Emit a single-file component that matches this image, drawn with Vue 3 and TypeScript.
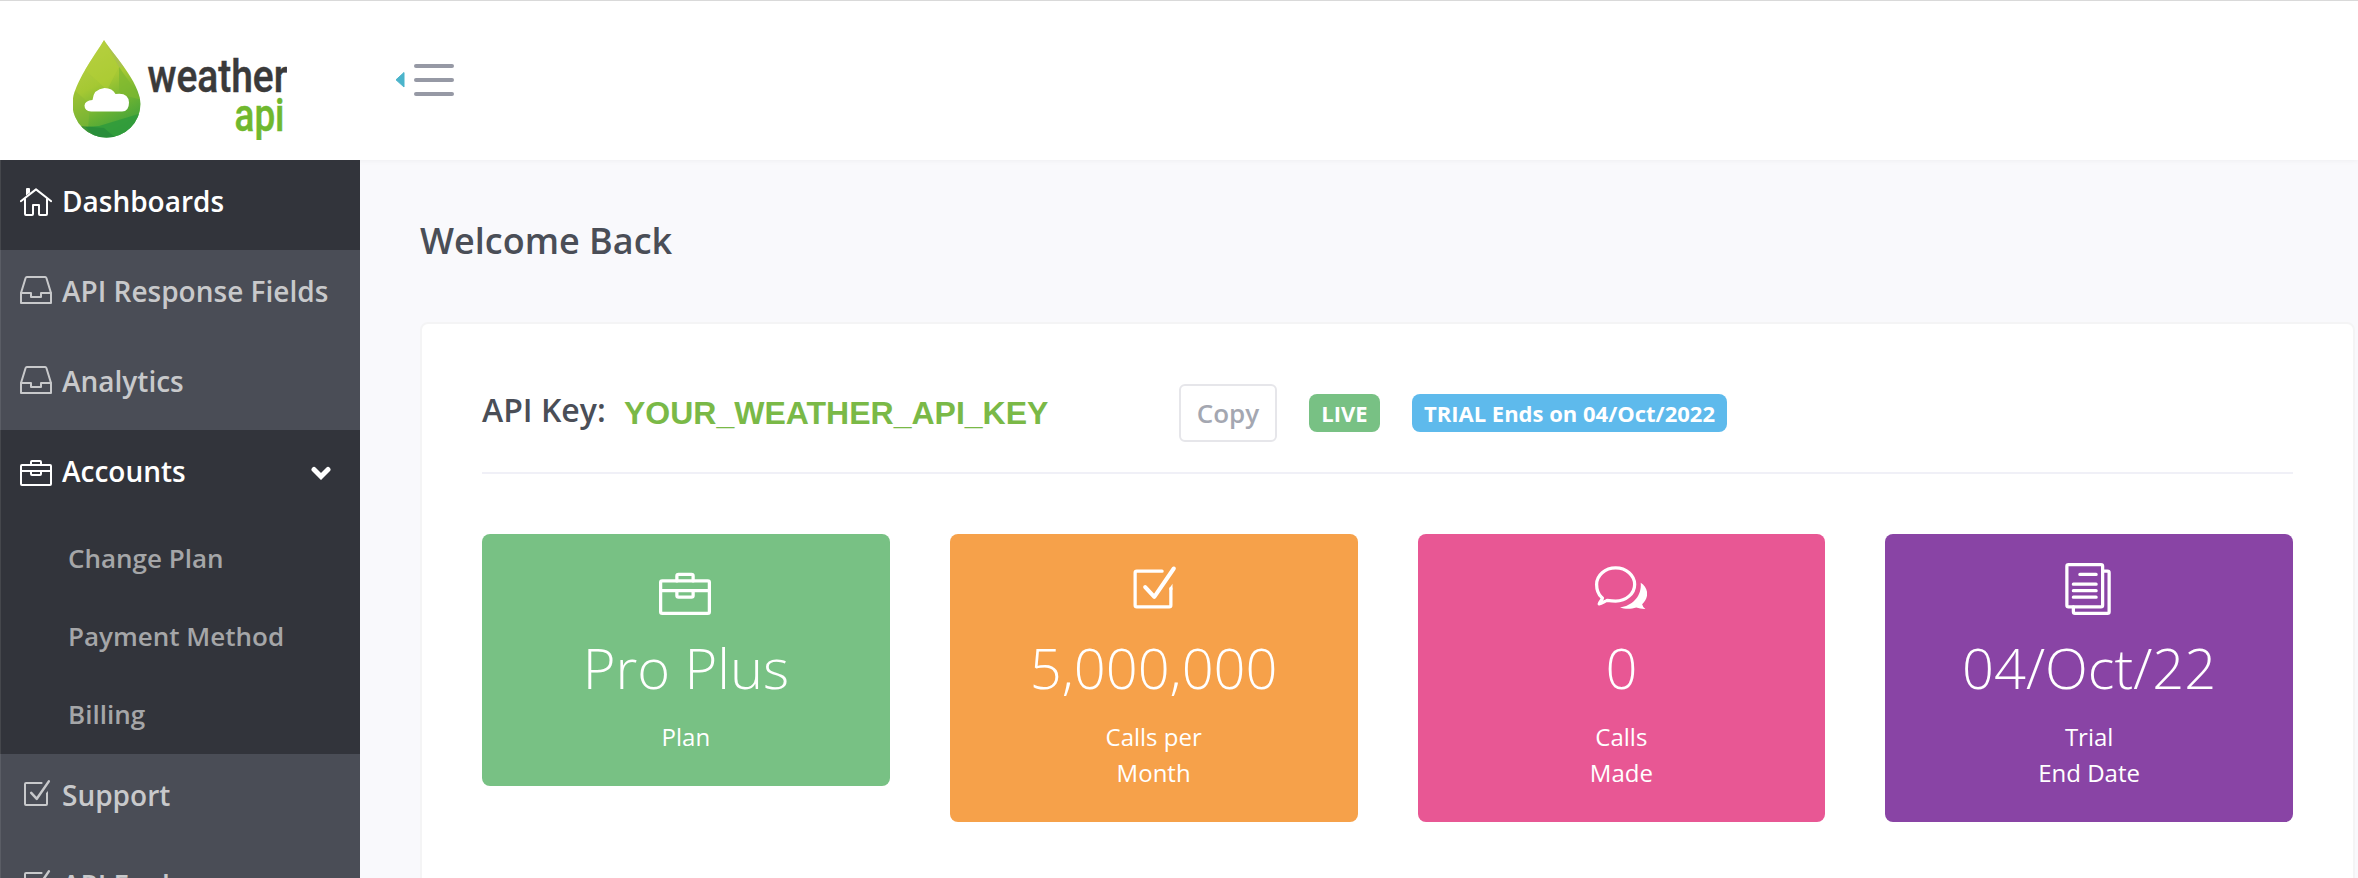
<script setup lang="ts">
interface Shape { d: string; solid?: boolean; width?: number }
type IconName = 'home' | 'inbox' | 'case' | 'check' | 'chat' | 'docs'

const icons: Record<IconName, Shape[]> = {
  home: [
    { d: 'M.4 8.6L8 2.7L15.6 8.6' },
    { d: 'M2.5 7.5V15q0 .5.5.5h3q.5 0 .5-.5v-4.5h3V15q0 .5.5.5h3q.5 0 .5-.5V7.5' },
    { d: 'M3 2.5q0-.5.5-.5h1q.5 0 .5.5v1.7L3 5.8z', solid: true },
  ],
  inbox: [
    { d: 'M.5 9.5L2.8 2q.2-.5.6-.5h9.2q.4 0 .6.5L15.5 9.5V14.5H.5z' },
    { d: 'M.5 9.5h5v2h5v-2h5' },
  ],
  case: [
    { d: 'M1 5.5h14q.5 0 .5.5v9q0 .5-.5.5H1q-.5 0-.5-.5V6q0-.5.5-.5z' },
    { d: 'M5.5 5.5V4q0-.5.5-.5h4q.5 0 .5.5v1.5M.5 8.5h15M5.5 8.5V10q0 .5.5.5h4q.5 0 .5-.5V8.5' },
  ],
  check: [
    { d: 'M10.8 2.5H3q-.5 0-.5.5v10q0 .5.5.5h10q.5 0 .5-.5V7.8' },
    { d: 'M13 7.9l1-1.5v1.8h-1z', solid: true },
    { d: 'M5.6 7.4L8.4 10.4L14.4 1.7', width: 1.25 },
  ],
  chat: [
    { d: 'M2 10.5C.9 9.5.5 8 .5 6.6C.5 3.8 3.1 1.5 6.35 1.5S12.2 3.8 12.2 6.6S9.6 11.7 6.35 11.7C5.3 11.7 4.5 11.6 3.7 11.5C2.8 11.9 2.1 12.5 1.3 12.6C1.4 11.9 2.3 11.2 2.3 10.8z' },
    { d: 'M14.05 6.05C15.4 6.9 16.1 8.2 16.05 9.6C16 10.9 15.3 12 14.5 12.7Q14.7 13.6 15.5 14.15Q14 14.2 12.7 13.7C11 14.3 9 14.2 7.7 13.7C11.5 13.2 14.5 10.2 14.05 6.05z', solid: true },
  ],
  docs: [
    { d: 'M2 .5h10q.5 0 .5.5v12q0 .5-.5.5H2q-.5 0-.5-.5V1q0-.5.5-.5z' },
    { d: 'M5.5 3.5h5M3.5 6.5h7M3.5 8.5h7M3.5 10.5h7' },
    { d: 'M12.5 2.5H14q.5 0 .5.5v12q0 .5-.5.5H4q-.5 0-.5-.5v-1.5' },
  ],
}

interface NavItem { label: string; icon: IconName; active?: boolean; children?: string[] }
const nav: NavItem[] = [
  { label: 'Dashboards', icon: 'home', active: true },
  { label: 'API Response Fields', icon: 'inbox' },
  { label: 'Analytics', icon: 'inbox' },
  { label: 'Accounts', icon: 'case', active: true, children: ['Change Plan', 'Payment Method', 'Billing'] },
  { label: 'Support', icon: 'check' },
  { label: 'API Explorer', icon: 'check' },
]

interface Tile { tone: string; icon: IconName; value: string; lines: string[] }
const tiles: Tile[] = [
  { tone: 'green', icon: 'case', value: 'Pro Plus', lines: ['Plan'] },
  { tone: 'orange', icon: 'check', value: '5,000,000', lines: ['Calls per', 'Month'] },
  { tone: 'pink', icon: 'chat', value: '0', lines: ['Calls', 'Made'] },
  { tone: 'purple', icon: 'docs', value: '04/Oct/22', lines: ['Trial', 'End Date'] },
]
</script>

<template>
  <div class="page">
    <header class="topbar">
      <svg class="logo" viewBox="0 0 214 104" width="214" height="104">
        <defs>
          <linearGradient id="drop" x1=".3" y1="0" x2=".65" y2="1">
            <stop offset="0" stop-color="#b9cf4a" />
            <stop offset=".4" stop-color="#a5c833" />
            <stop offset=".68" stop-color="#68b133" />
            <stop offset="1" stop-color="#2c9a3f" />
          </linearGradient>
          <clipPath id="dropClip"><path d="M31 0C38 12 67.500 42 67.500 64A34 33.500 0 0 1-.5 64C-.5 44 23 14 31 0z" /></clipPath>
        </defs>
        <g clip-path="url(#dropClip)">
          <rect x="-1" width="70" height="104" fill="url(#drop)" />
          <path d="M31 0L46 27L60 26z" fill="#a9bf55" opacity=".7" />
          <path d="M31 0L46 27L34 50L10 28z" fill="#b3cf35" opacity=".5" />
          <path d="M-1 48L17 64L15 90L-1 80z" fill="#8cb836" opacity=".45" />
          <path d="M46 27L69 60L46 54z" fill="#7db82f" opacity=".7" />
          <path d="M69 73L26 86L12 87L30 104H69z" fill="#2f9b3c" opacity=".85" />
          <path d="M8 86L31 88L50 104H20z" fill="#23843a" opacity=".6" />
        </g>
        <path d="M18 71.500q-6.500-.500-6.500-6q.5-5 8-5.500q1-11 12-12q8 0 11 6q13-2 13.500 8.500q0 9-7 9z" fill="#fff" />
        <text x="74.500" y="51.500" class="word dark" textLength="140" lengthAdjust="spacingAndGlyphs">weather</text>
        <text x="161.500" y="91" class="word lime" textLength="50" lengthAdjust="spacingAndGlyphs">api</text>
      </svg>
      <button class="toggle" type="button" aria-label="Toggle menu">
        <svg width="10" height="18" viewBox="0 0 10 18"><path d="M9 1.500L1 8.800L9 16z" fill="#4bb4cb" stroke="#4bb4cb" stroke-linejoin="round" /></svg>
        <span class="bars"><i /><i /><i /></span>
      </button>
    </header>

    <div class="body">
      <nav class="sidebar">
        <div v-for="item in nav" :key="item.label" class="group" :class="{ active: item.active }">
          <a class="link">
            <svg class="glyph" viewBox="0 0 16 16">
              <path v-for="(s, i) in icons[item.icon]" :key="i" :d="s.d" :class="{ solid: s.solid }" :stroke-width="s.width ?? 1" />
            </svg>
            <span class="label">{{ item.label }}</span>
            <svg v-if="item.children" class="chevron" width="20" height="14" viewBox="0 0 20 14"><path d="M3 3.500L10 10.500L17 3.500" /></svg>
          </a>
          <a v-for="child in item.children" :key="child" class="sub">{{ child }}</a>
        </div>
      </nav>

      <main class="content">
        <h1>Welcome Back</h1>
        <section class="card">
          <div class="keyrow">
            <span class="keylabel">API Key:</span>
            <span class="key">YOUR_WEATHER_API_KEY</span>
            <button class="copy" type="button">Copy</button>
            <span class="badge live">LIVE</span>
            <span class="badge trial">TRIAL Ends on 04/Oct/2022</span>
          </div>
          <div class="tiles">
            <article v-for="t in tiles" :key="t.value" class="tile" :class="t.tone">
              <svg class="glyph" viewBox="0 0 16 16">
                <path v-for="(s, i) in icons[t.icon]" :key="i" :d="s.d" :class="{ solid: s.solid }" :stroke-width="s.width ?? 1" />
              </svg>
              <div class="value">{{ t.value }}</div>
              <div v-for="line in t.lines" :key="line" class="line">{{ line }}</div>
            </article>
          </div>
        </section>
      </main>
    </div>
  </div>
</template>

<style>
html, body { margin: 0; overflow: hidden; }
</style>

<style scoped>
.page { box-sizing: border-box; width: 100vw; height: 878px; overflow: hidden; display: flex; flex-direction: column; background: #f9f9fc; font-family: "Open Sans", "Noto Sans", sans-serif; }
.topbar { box-sizing: border-box; flex: none; height: 160px; display: flex; align-items: flex-start; background: #fff; border-top: 1px solid #d9d9d9; box-shadow: 0 0 6px rgba(0, 0, 0, .06); padding-left: 73px; }
.logo { flex: none; margin-top: 39px; clip-path: inset(0 0 4px 0); }
.word { font-family: Roboto, sans-serif; font-size: 47px; font-weight: 500; stroke-width: .5; }
.dark { fill: #3a3a3a; stroke: #3a3a3a; }
.lime { fill: #70b82e; stroke: #70b82e; }
.toggle { display: flex; align-items: flex-start; gap: 9px; margin: 63px 0 0 108px; padding: 0; border: 0; background: none; }
.toggle svg { margin-top: 7px; }
.bars { display: flex; flex-direction: column; gap: 10px; }
.bars i { width: 40px; height: 4px; border-radius: 2px; background: #9699a5; }
.body { flex: 1; min-height: 0; display: flex; position: relative; }
.sidebar { box-sizing: border-box; flex: none; width: 360px; overflow: hidden; background: #4a4d56; box-shadow: inset 1px 0 #5a5d65; }
.group.active { background: #32343b; box-shadow: inset 1px 0 #45474c; }
.link { display: flex; align-items: flex-start; height: 90px; padding: 0 29px 0 20px; box-sizing: border-box; color: #c8c9cb; font-size: 28px; font-weight: 600; line-height: 40px; }
.active .link { color: #fff; }
.glyph { flex: none; width: 32px; height: 32px; fill: none; stroke: currentColor; stroke-linecap: round; stroke-linejoin: round; }
.link .glyph { margin-top: 24px; }
.solid { fill: currentColor; stroke: none; }
.label { margin: 21px auto 0 10px; white-space: nowrap; }
.chevron { margin-top: 36px; fill: none; stroke: #fff; stroke-width: 5; stroke-linecap: round; stroke-linejoin: miter; }
.sub { display: block; height: 78px; padding-left: 68px; color: #a5a6a8; font-size: 26px; font-weight: 600; line-height: 77px; }
.content { flex: 1; padding: 0 3px 0 60px; }
h1 { margin: 56px 0 0; height: 106px; color: #4a4e57; font-size: 36px; font-weight: 600; line-height: 50px; }
.card { box-sizing: border-box; height: 700px; padding: 60px 60px 0; border: 2px solid #f4f4f5; border-radius: 8px; background: #fff; }
.keyrow { display: flex; align-items: flex-start; height: 88px; border-bottom: 2px solid #f0f0f7; color: #4a4e57; }
.keylabel { width: 142px; margin-top: 4px; font-size: 32px; font-weight: 600; line-height: 44px; white-space: nowrap; }
.key { width: 555px; margin-top: 11px; color: #7ab947; font: 700 32px/37px "Liberation Sans", Arial, sans-serif; }
.copy { box-sizing: border-box; width: 98px; height: 58px; padding: 0; border: 2px solid #e6e6ea; border-radius: 6px; background: #fff; color: #a4a7b1; font: 600 26px/52px "Open Sans", sans-serif; }
.badge { height: 38px; margin-top: 10px; border-radius: 8px; color: #fff; font-size: 22px; font-weight: 700; line-height: 38px; text-align: center; white-space: nowrap; }
.live { width: 71px; margin-left: 32px; background: #78c184; }
.trial { width: 315px; margin-left: 32px; background: #5ebaec; }
.tiles { display: grid; grid-template-columns: repeat(4, 1fr); gap: 60px; align-items: start; margin-top: 60px; }
.tile { display: flex; flex-direction: column; align-items: center; padding: 29px 0 31px; border-radius: 8px; color: #fff; }
.tile .glyph { width: 52px; height: 52px; margin-right: 1.500px; }
.value { margin: 20px 0 19px; font-size: 56px; font-weight: 300; line-height: 65px; }
.line { font-size: 24px; line-height: 36px; }
.green { background: #78c184; }
.orange { background: #f6a14a; }
.pink { background: #e85794; }
.purple { background: #8944a5; }
</style>
